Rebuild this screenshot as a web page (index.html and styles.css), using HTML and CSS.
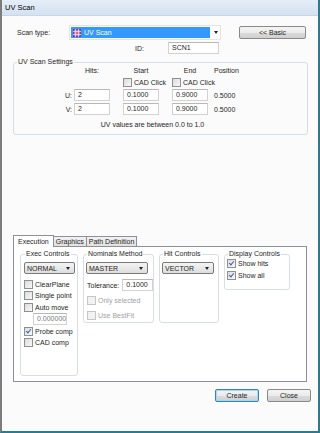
FILE: index.html
```html
<!DOCTYPE html>
<html lang="en">
<head>
    <meta charset="UTF-8">
    <title>UV Scan</title>
    <link rel="stylesheet" href="styles.css">
</head>
<body>

    <div class="window">
        <div class="titlebar">UV Scan</div>

        <div class="client">
            <!-- Scan type row -->
            <div class="top-row">
                <span class="lbl scan-lbl">Scan type:</span>
                <div class="combo combo-selected">
                    <svg class="scan-icon" width="8" height="8" viewBox="0 0 8 8">
                        <rect x="0.5" y="0.5" width="7" height="7" fill="#c56fa8" stroke="#8a3d7a" stroke-width="1"/>
                        <path d="M0 2.5H8M0 5.5H8M2.5 0V8M5.5 0V8" stroke="#f3d4ea" stroke-width="0.8"/>
                    </svg>
                    <span class="combo-text">UV Scan</span>
                    <span class="combo-arrow"></span>
                </div>
                <button class="btn basic-btn">&lt;&lt; Basic</button>
            </div>

            <div class="id-row">
                <span class="lbl id-lbl">ID:</span>
                <div class="textbox id-box">SCN1</div>
            </div>

            <!-- UV Scan Settings -->
            <fieldset class="group uv-group">
                <legend>UV Scan Settings</legend>
                <div class="uv-grid">
                    <span></span>
                    <span class="head">Hits:</span>
                    <span class="head">Start</span>
                    <span class="head">End</span>
                    <span class="head left">Position</span>

                    <span></span>
                    <span></span>
                    <label class="check"><span class="box"></span>CAD Click</label>
                    <label class="check"><span class="box"></span>CAD Click</label>
                    <span></span>

                    <span class="row-lbl">U:</span>
                    <div class="textbox uv-box">2</div>
                    <div class="textbox uv-box">0.1000</div>
                    <div class="textbox uv-box">0.9000</div>
                    <span class="pos">0.5000</span>

                    <span class="row-lbl">V:</span>
                    <div class="textbox uv-box">2</div>
                    <div class="textbox uv-box">0.1000</div>
                    <div class="textbox uv-box">0.9000</div>
                    <span class="pos">0.5000</span>
                </div>
                <p class="note">UV values are between 0.0 to 1.0</p>
            </fieldset>

            <!-- Tabs -->
            <div class="tabs">
                <div class="tab active">Execution</div>
                <div class="tab">Graphics</div>
                <div class="tab">Path Definition</div>
            </div>

            <div class="tab-panel">
                <fieldset class="group exec-group">
                    <legend>Exec Controls</legend>
                    <div class="combo combo-gray w50">
                        <span class="combo-text">NORMAL</span>
                        <span class="combo-arrow"></span>
                    </div>
                    <div class="checks">
                        <label class="check"><span class="box"></span>ClearPlane</label>
                        <label class="check"><span class="box"></span>Single point</label>
                        <label class="check"><span class="box"></span>Auto move</label>
                        <div class="textbox move-box">0.000000</div>
                        <label class="check"><span class="box checked"></span>Probe comp</label>
                        <label class="check"><span class="box"></span>CAD comp</label>
                    </div>
                </fieldset>

                <fieldset class="group nom-group">
                    <legend>Nominals Method</legend>
                    <div class="combo combo-gray w61">
                        <span class="combo-text">MASTER</span>
                        <span class="combo-arrow"></span>
                    </div>
                    <div class="tol-row">
                        <span class="lbl">Tolerance:</span>
                        <div class="textbox tol-box">0.1000</div>
                    </div>
                    <div class="checks nom-checks">
                        <label class="check disabled"><span class="box"></span>Only selected</label>
                        <label class="check disabled"><span class="box"></span>Use BestFit</label>
                    </div>
                </fieldset>

                <fieldset class="group hit-group">
                    <legend>Hit Controls</legend>
                    <div class="combo combo-gray w51">
                        <span class="combo-text">VECTOR</span>
                        <span class="combo-arrow"></span>
                    </div>
                </fieldset>

                <fieldset class="group disp-group">
                    <legend>Display Controls</legend>
                    <div class="checks disp-checks">
                        <label class="check"><span class="box checked"></span>Show hits</label>
                        <label class="check"><span class="box checked"></span>Show all</label>
                    </div>
                </fieldset>
            </div>

            <div class="footer">
                <button class="btn default-btn">Create</button>
                <button class="btn">Close</button>
            </div>
        </div>
    </div>

</body>
</html>
```

FILE: styles.css
```css
body {
    margin: 0;
    padding: 0;
    font-family: "Liberation Sans", Arial, sans-serif;
    font-size: 7px;
    color: #1e1e1e;
    background: #fbfbfb;
}

.window {
    width: 320px;
    height: 433px;
    box-sizing: border-box;
    border-left: 2px solid #7c7c7c;
    border-right: 2px solid #2b7a8f;
    border-bottom: 2px solid #2b7a8f;
    background: #fbfbfb;
    display: flex;
    flex-direction: column;
}

.titlebar {
    height: 16px;
    line-height: 16px;
    padding-left: 3px;
    background: linear-gradient(#e5eef8, #d3e1f0);
    border-bottom: 1px solid #c9d6e5;
    box-sizing: border-box;
    color: #000;
    font-size: 7.5px;
}

.client {
    flex: 1;
    padding: 0 6px 0 11px;
}

.lbl {
    white-space: nowrap;
}

/* top rows */
.top-row {
    display: flex;
    align-items: center;
    margin-top: 9px;
    height: 14px;
}

.scan-lbl {
    margin-left: 4px;
    width: 52px;
}

.combo {
    position: relative;
    display: flex;
    align-items: center;
    height: 12px;
    box-sizing: border-box;
    white-space: nowrap;
}

.combo-selected {
    width: 152px;
    height: 15px;
    background: #fff;
    border: 1px solid #e4e4e4;
    padding: 1px 10px 1px 1px;
}

.combo-selected .combo-text {
    flex: 1;
    height: 100%;
    display: flex;
    align-items: center;
    background: #3399ff;
    color: #fff;
    padding-left: 13px;
}

.scan-icon {
    position: absolute;
    left: 3px;
    top: 3px;
}

.combo-arrow {
    position: absolute;
    right: 4px;
    top: 50%;
    margin-top: -1px;
    border-left: 2.5px solid transparent;
    border-right: 2.5px solid transparent;
    border-top: 3px solid #222;
}

.combo-selected .combo-arrow {
    right: 2px;
}

.combo-gray {
    background: linear-gradient(#f4f4f4, #dedede);
    border: 1px solid #7a7a7a;
    border-radius: 2px;
    padding-left: 2px;
}

.w50 { width: 51px; }
.w61 { width: 62px; }
.w51 { width: 52px; }

.btn {
    font-family: inherit;
    font-size: 7px;
    color: #1e1e1e;
    height: 13px;
    padding: 0;
    border: 1px solid #8a8a8a;
    border-radius: 2px;
    background: linear-gradient(#f4f4f4 0%, #ebebeb 50%, #dcdcdc 51%, #d0d0d0 100%);
}

.basic-btn {
    width: 67px;
    margin-left: 18px;
}

.id-row {
    display: flex;
    align-items: center;
    margin-top: 3px;
    height: 12px;
}

.id-lbl {
    margin-left: 122px;
    width: 33px;
}

.textbox {
    box-sizing: border-box;
    height: 12px;
    line-height: 10px;
    border: 1px solid #d2d2d2;
    border-top-color: #b8b8b8;
    background: #fff;
    padding-left: 3px;
    white-space: nowrap;
    overflow: hidden;
}

.id-box {
    width: 51px;
}

/* group boxes */
.group {
    margin: 0;
    border: 1px solid #d8dee3;
    border-radius: 3px;
    min-width: 0;
    box-sizing: border-box;
}

.group legend {
    padding: 0 1px;
    margin-left: 1px;
    line-height: 8px;
    color: #1e1e1e;
}

.uv-group {
    margin-top: 4px;
    width: 295px;
    height: 77px;
    padding: 0 0 0 2px;
}

.uv-grid {
    display: grid;
    grid-template-columns: 58px 49px 49px 42px auto;
    grid-template-rows: 9px 10px 12px 12px;
    row-gap: 2px;
    align-items: center;
}

.uv-grid .head {
    width: 36px;
    text-align: center;
}

.uv-grid .head.left {
    text-align: left;
}

.row-lbl {
    text-align: right;
    padding-right: 2px;
}

.uv-box {
    width: 36px;
}

.note {
    margin: 6px 0 0 0;
    text-align: center;
    padding-right: 18px;
    line-height: 8px;
}

/* check boxes */
.check {
    display: flex;
    align-items: center;
    white-space: nowrap;
    height: 10px;
}

.check .box {
    width: 7px;
    height: 7px;
    border: 1px solid #8e8f8f;
    background: linear-gradient(135deg, #dcdcdc, #f8f8f8);
    margin-right: 2px;
    flex: none;
    position: relative;
}

.check .box.checked::after {
    content: "";
    position: absolute;
    left: 2px;
    top: 0px;
    width: 2px;
    height: 4px;
    border-right: 1.2px solid #3c5fa4;
    border-bottom: 1.2px solid #3c5fa4;
    transform: rotate(40deg);
}

.check.disabled {
    color: #a2a2a2;
}

.check.disabled .box {
    border-color: #c6c6c6;
    background: #f2f2f2;
}

/* tabs */
.tabs {
    display: flex;
    align-items: flex-end;
    margin-top: 100px;
    margin-left: 2px;
    height: 11px;
}

.tab {
    height: 9px;
    line-height: 9px;
    padding: 0 2px;
    border: 1px solid #8e9099;
    border-bottom: none;
    margin-right: -1px;
    background: linear-gradient(#f2f2f2, #e0e0e0);
    white-space: nowrap;
}

.tab.active {
    height: 11px;
    line-height: 11px;
    background: #fff;
    margin-left: -2px;
    margin-right: -1px;
    padding: 0 4px;
    position: relative;
    z-index: 1;
    margin-bottom: -1px;
}

.tab-panel {
    height: 136px;
    width: 294px;
    box-sizing: border-box;
    border: 1px solid #8e9099;
    background: #fff;
    display: flex;
    align-items: flex-start;
    gap: 5px;
    padding: 3px 0 0 6px;
}

.exec-group {
    width: 58px;
    height: 126px;
    padding: 0 0 0 3px;
}

.nom-group {
    width: 71px;
    height: 73px;
    padding: 0 0 0 2px;
}

.hit-group {
    width: 60px;
    height: 73px;
    padding: 0 0 0 2px;
}

.disp-group {
    width: 66px;
    height: 40px;
    padding: 0 0 0 2px;
}

.group .combo-gray {
    margin-top: 4px;
}

.checks {
    margin-top: 5px;
    display: flex;
    flex-direction: column;
    gap: 1.5px;
}

.move-box {
    width: 34px;
    margin-left: 9px;
    color: #7a7a7a;
    margin-top: -1px;
}

.tol-row {
    display: flex;
    align-items: center;
    gap: 3px;
    margin-top: 5px;
    padding-left: 1px;
}

.tol-box {
    width: 31px;
}

.nom-checks {
    margin-top: 4px;
    gap: 5px;
    padding-left: 1px;
}

.disp-checks {
    margin-top: 0;
    gap: 2px;
}

/* footer */
.footer {
    display: flex;
    justify-content: flex-end;
    gap: 8px;
    margin-top: 7px;
    padding-right: 1px;
}

.footer .btn {
    width: 44px;
    height: 13px;
}

.default-btn {
    border-color: #3c7fb1;
    box-shadow: inset 0 0 0 1px #a6d8f4;
}
```
